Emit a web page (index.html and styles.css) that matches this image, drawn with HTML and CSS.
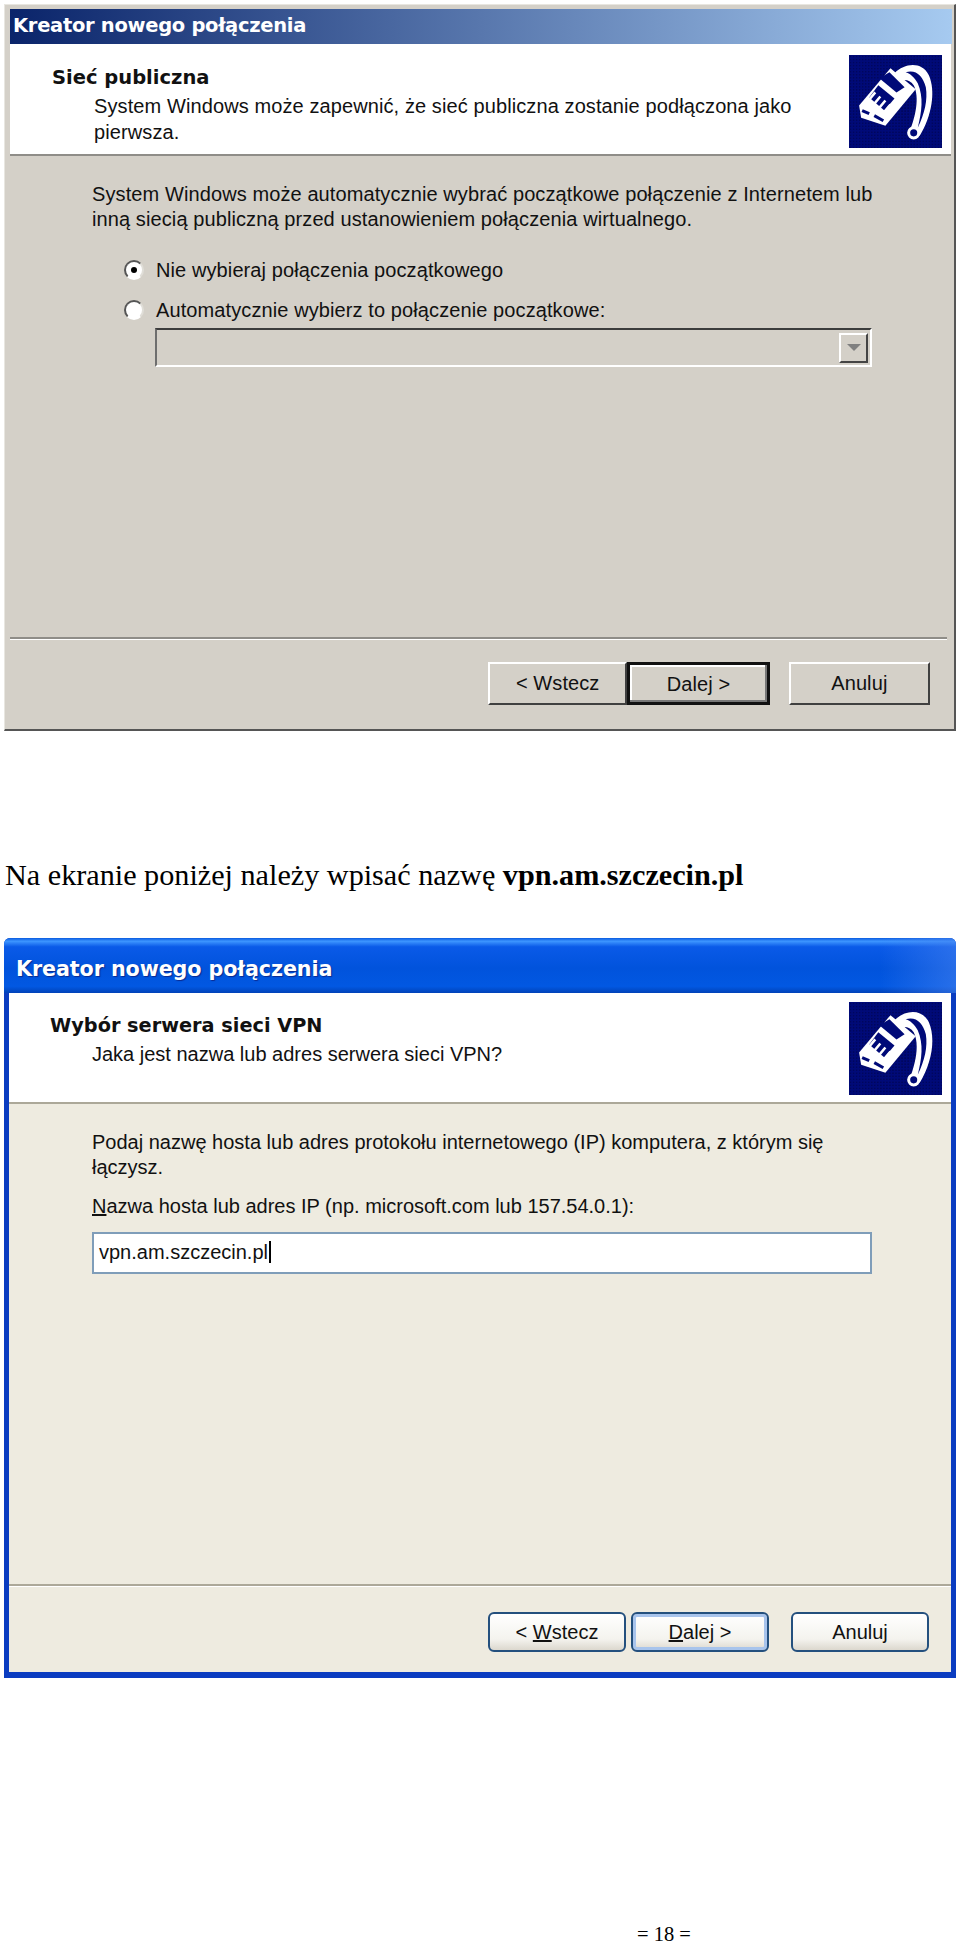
FILE: index.html
```html
<!DOCTYPE html>
<html lang="pl">
<head>
    <meta charset="UTF-8">
    <title>Kreator nowego połączenia</title>
    <link rel="stylesheet" href="styles.css">
</head>
<body>
    <svg class="defs" width="0" height="0">
        <defs>
            <pattern id="dots" width="3" height="3" patternUnits="userSpaceOnUse">
                <rect width="3" height="3" fill="#000a78"/>
                <rect x="1" y="1" width="1" height="1" fill="#00003c"/>
            </pattern>
            <symbol id="plug" viewBox="0 0 92 92">
                <rect width="92" height="92" fill="url(#dots)"/>
                <!-- cable -->
                <path d="M45 18C55 8 72 6 79 20C86 36 82 60 70 80L60 76C66 60 70 42 64 30C60 24 54 24 50 26Z" fill="#fff"/>
                <path d="M56 17C66 14 73 20 76 32C78 44 75 58 68 72C72 56 74 42 68 28C65 22 60 18 56 17Z" fill="#000a78"/>
                <circle cx="64" cy="77" r="5" fill="#000a78" stroke="#fff" stroke-width="3"/>
                <!-- plug body -->
                <path d="M10 50L41 13L66 34L36 70L12 62Z" fill="#fff"/>
                <path d="M30 23L40 17L55 32L47 37Z" fill="#000a78"/>
                <path d="M20 42L29 30L45 43L35 55Z" fill="#000a78"/>
                <path d="M16 49L26 37M21 53L31 41M26 57L36 45M31 61L41 49" stroke="#fff" stroke-width="2.5"/>
                <path d="M13 55L20 58M25 60L34 65" stroke="#000a78" stroke-width="3"/>
            </symbol>
        </defs>
    </svg>

    <div class="dialog dialog-classic">
        <div class="titlebar">Kreator nowego połączenia</div>
        <div class="head">
            <div class="head-text">
                <div class="head-title">Sieć publiczna</div>
                <div class="head-sub">System Windows może zapewnić, że sieć publiczna zostanie podłączona jako pierwsza.</div>
            </div>
            <svg class="head-icon"><use href="#plug"/></svg>
        </div>
        <div class="content">
            <p class="para">System Windows może automatycznie wybrać początkowe połączenie z Internetem lub inną siecią publiczną przed ustanowieniem połączenia wirtualnego.</p>
            <div class="radio-row radio-first"><span class="radio radio-on"></span>Nie wybieraj połączenia początkowego</div>
            <div class="radio-row"><span class="radio"></span>Automatycznie wybierz to połączenie początkowe:</div>
            <div class="combo"><span class="combo-btn"></span></div>
        </div>
        <div class="footer">
            <div class="btn">&lt; Wstecz</div>
            <div class="btn btn-default">Dalej &gt;</div>
            <div class="btn btn-cancel">Anuluj</div>
        </div>
    </div>

    <p class="doc-line">Na ekranie poniżej należy wpisać nazwę <b>vpn.am.szczecin.pl</b></p>

    <div class="dialog dialog-xp">
        <div class="titlebar">Kreator nowego połączenia</div>
        <div class="head">
            <div class="head-text">
                <div class="head-title">Wybór serwera sieci VPN</div>
                <div class="head-sub">Jaka jest nazwa lub adres serwera sieci VPN?</div>
            </div>
            <svg class="head-icon"><use href="#plug"/></svg>
        </div>
        <div class="content">
            <p class="para">Podaj nazwę hosta lub adres protokołu internetowego (IP) komputera, z którym się łączysz.</p>
            <div class="field-label"><u>N</u>azwa hosta lub adres IP (np. microsoft.com lub 157.54.0.1):</div>
            <div class="input">vpn.am.szczecin.pl<span class="caret"></span></div>
        </div>
        <div class="footer">
            <div class="btn">&lt; <u>W</u>stecz</div>
            <div class="btn btn-default"><u>D</u>alej &gt;</div>
            <div class="btn btn-cancel">Anuluj</div>
        </div>
    </div>

    <div class="page-no">= 18 =</div>
</body>
</html>
```

FILE: styles.css
```css
* {
    margin: 0;
    padding: 0;
    box-sizing: border-box;
}

body {
    background: #fff;
    color: #111;
    font-family: "Liberation Sans", Arial, sans-serif;
    font-size: 20px;
    letter-spacing: 0.1px;
    padding-top: 4px;
}

.defs {
    position: absolute;
}

.dialog {
    display: flex;
    flex-direction: column;
    margin-left: 4px;
    width: 952px;
}

.dialog-classic {
    height: 727px;
    background: #d4d0c8;
    border: 1px solid;
    border-color: #e8e6e0 #555 #555 #e8e6e0;
    border-width: 1px 2px 2px 1px;
    padding: 4px 2px 0 5px;
}

.dialog-xp {
    height: 740px;
    margin-top: 47px;
    background: #eeebe0;
    border: solid #0a3cc0;
    border-width: 0 5px 6px 5px;
    border-radius: 6px 6px 0 0;
    letter-spacing: 0;
}

.titlebar {
    font-family: "DejaVu Sans", sans-serif;
    font-weight: bold;
    color: #fff;
}

.dialog-classic .titlebar {
    height: 35px;
    line-height: 34px;
    padding-left: 3px;
    font-size: 19.5px;
    letter-spacing: -0.3px;
    background: linear-gradient(90deg, #0a246a 0%, #a6caf0 100%);
}

.dialog-xp .titlebar {
    height: 55px;
    margin: 0 -5px;
    line-height: 63px;
    padding-left: 12px;
    font-size: 20.7px;
    letter-spacing: -0.1px;
    text-shadow: 1px 1px 1px #0a2a90;
    border-radius: 6px 6px 0 0;
    background:
        linear-gradient(90deg, transparent 92%, rgba(70, 130, 240, 0.55) 100%),
        linear-gradient(180deg, #0a5be0 0%, #3d95ff 6%, #0a5ae8 16%, #0153dc 55%, #0258e2 88%, #0142b8 100%);
}

.head {
    display: flex;
    justify-content: space-between;
    background: #fff;
    border-bottom: 2px solid #8f8d88;
}

.dialog-classic .head {
    height: 112px;
    padding: 11px 9px 0 42px;
    margin-right: 1px;
}

.dialog-xp .head {
    height: 111px;
    padding: 9px 9px 0 41px;
    border-bottom-color: #aca899;
}

.head-text {
    width: 740px;
}

.head-title {
    font-family: "DejaVu Sans", sans-serif;
    font-weight: bold;
    font-size: 19.5px;
    letter-spacing: 0;
    line-height: 24px;
    margin-top: 11px;
}

.dialog-xp .head-title {
    font-size: 19.3px;
    margin-top: 12px;
}

.head-sub {
    padding-left: 42px;
    margin-top: 3px;
    line-height: 26px;
}

.head-icon {
    width: 93px;
    height: 93px;
    flex: none;
}

.content {
    flex: 1;
    padding: 26px 0 0 82px;
}

.dialog-xp .content {
    padding: 26px 0 0 83px;
}

.para {
    width: 800px;
    line-height: 25px;
}

.radio-row {
    display: flex;
    align-items: center;
    gap: 12px;
    height: 40px;
    padding-left: 32px;
}

.radio-first {
    margin-top: 18px;
}

.radio {
    position: relative;
    width: 20px;
    height: 20px;
    background: #fff;
    border: 2px solid;
    border-color: #555 #e0ded8 #fff #555;
    border-radius: 50%;
}

.radio-on::after {
    content: "";
    position: absolute;
    left: 5px;
    top: 5px;
    width: 6px;
    height: 6px;
    background: #000;
    border-radius: 50%;
}

.combo {
    display: flex;
    justify-content: flex-end;
    align-items: center;
    width: 717px;
    height: 39px;
    margin: -2px 0 0 63px;
    padding-right: 2px;
    border: 2px solid;
    border-color: #3c3c3c #fff #fff #6e6e6e;
}

.combo-btn {
    display: flex;
    justify-content: center;
    align-items: center;
    width: 29px;
    height: 30px;
    border: 2px solid;
    border-color: #fff #444 #444 #fff;
}

.combo-btn::after {
    content: "";
    border: 7px solid transparent;
    border-top: 7px solid #808080;
    border-bottom: 0;
}

.field-label {
    margin-top: 14px;
    line-height: 25px;
}

.input {
    width: 780px;
    height: 42px;
    margin-top: 13px;
    padding-left: 5px;
    line-height: 36px;
    background: #fff;
    border: 2px solid #7f9db9;
}

.caret {
    display: inline-block;
    width: 2px;
    height: 22px;
    margin-left: 1px;
    vertical-align: -4px;
    background: #000;
}

.footer {
    display: flex;
    border-top: 2px solid #8f8d88;
    box-shadow: inset 0 1px 0 #fff;
}

.dialog-classic .footer {
    height: 92px;
    margin-right: 5px;
    padding: 23px 17px 0 478px;
}

.dialog-xp .footer {
    height: 88px;
    border-top-color: #aca899;
    padding: 26px 21px 0 479px;
}

.btn {
    height: 43px;
    width: 140px;
    text-align: center;
    line-height: 38px;
}

.dialog-classic .btn {
    border: 2px solid;
    border-color: #fff #404040 #404040 #fff;
}

.dialog-classic .btn-default {
    width: 143px;
    border: 3px solid #111;
    box-shadow: inset -2px -2px 0 #777, inset 2px 2px 0 #fff;
}

.dialog-classic .btn-cancel {
    width: 142px;
    margin-left: 19px;
}

.dialog-xp .btn {
    width: 138px;
    height: 40px;
    line-height: 36px;
    background: linear-gradient(180deg, #fff 0%, #f4f3ee 70%, #dcd8ce 100%);
    border: 2px solid #24507e;
    border-radius: 6px;
}

.dialog-xp .btn-default {
    margin-left: 5px;
    box-shadow: inset 0 0 0 3px #a8c4ec;
}

.dialog-xp .btn-cancel {
    margin-left: 22px;
}

.doc-line {
    margin: 128px 0 0 5px;
    height: 32px;
    font-family: "Liberation Serif", serif;
    font-size: 30.2px;
    letter-spacing: 0;
    line-height: 32px;
    color: #000;
}

.page-no {
    margin: 245px 0 0 637px;
    font-family: "Liberation Serif", serif;
    font-size: 20.5px;
    letter-spacing: 0;
    line-height: 22px;
    color: #000;
}
```
